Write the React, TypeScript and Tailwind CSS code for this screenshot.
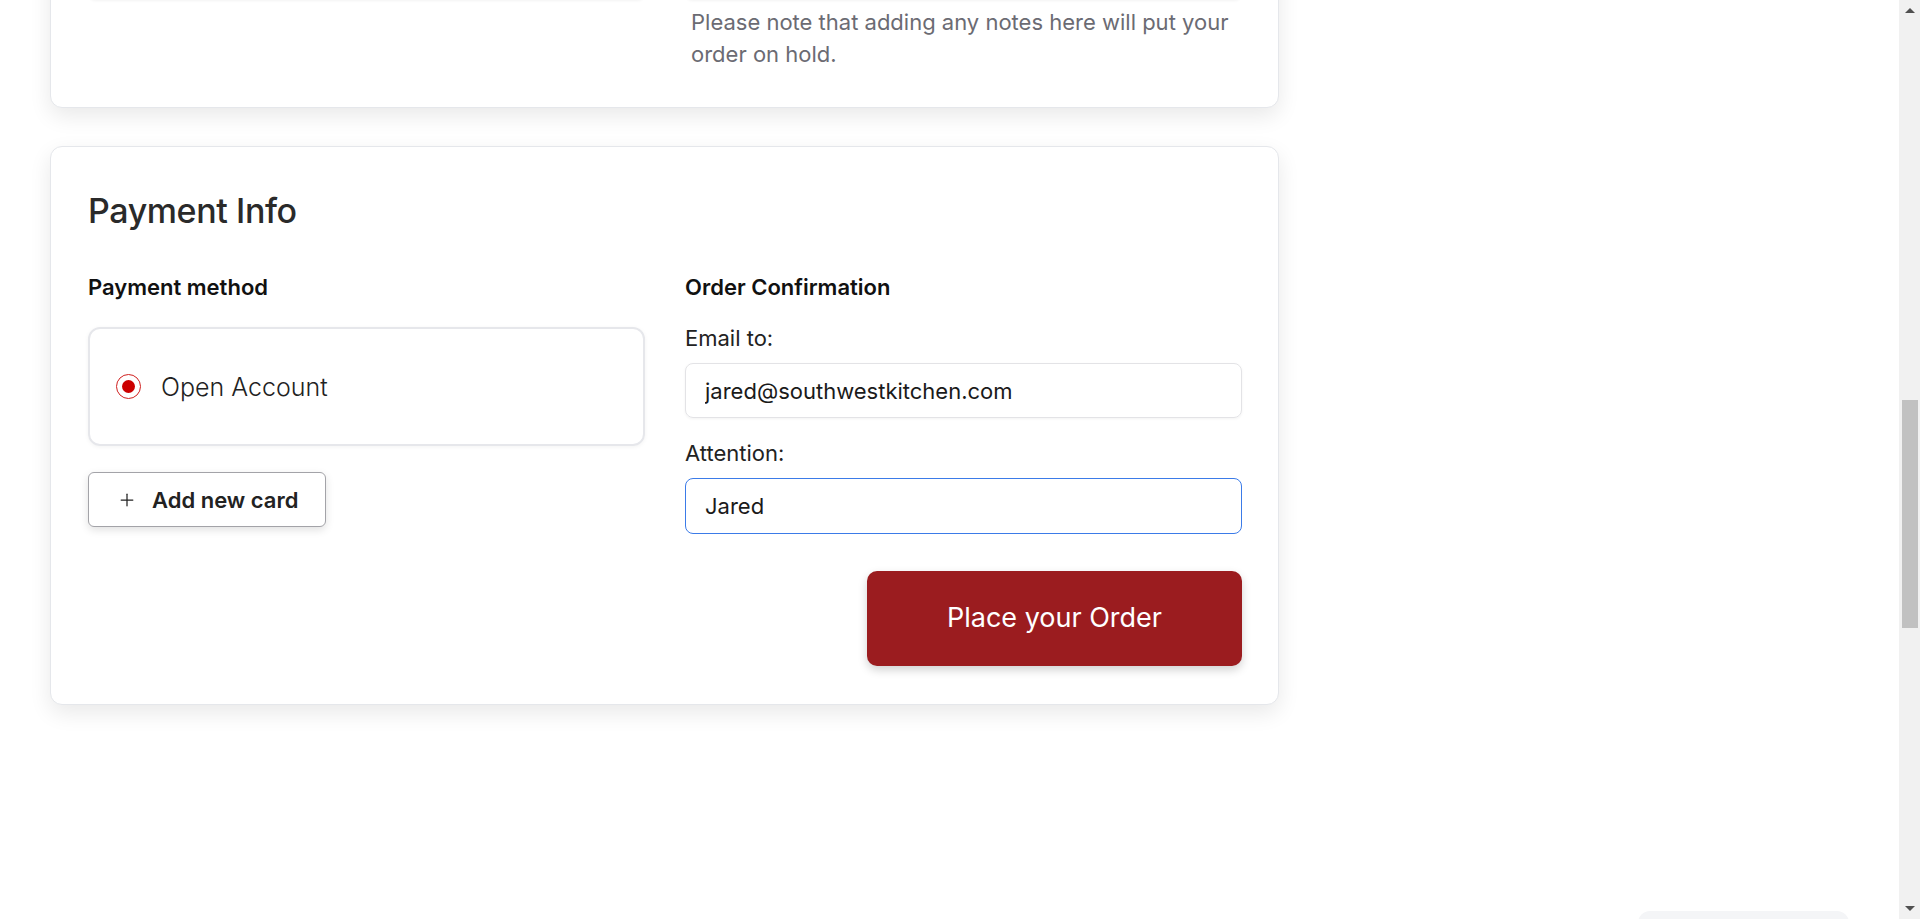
import React, { useState } from "react";
import { Plus } from "lucide-react";

const ScrollBar = () => {
  return (
    <div className="flex h-full w-[21px] shrink-0 flex-col items-center bg-[#f1f1f1]">
      <div className="flex h-[21px] w-full items-center justify-center">
        <div className="h-0 w-0 border-x-[5px] border-b-[5px] border-x-transparent border-b-[#505050]" />
      </div>
      <div className="h-[379px]" />
      <div className="h-[228px] w-[16px] bg-[#c1c1c1]" />
      <div className="flex-1" />
      <div className="flex h-[21px] w-full items-center justify-center">
        <div className="h-0 w-0 border-x-[5px] border-t-[5px] border-x-transparent border-t-[#505050]" />
      </div>
    </div>
  );
};

const App = () => {
  const [email, setEmail] = useState("jared@southwestkitchen.com");
  const [attention, setAttention] = useState("Jared");
  const [method, setMethod] = useState("open");

  return (
    <div className="flex h-[919px] w-full overflow-hidden bg-white font-['Inter',sans-serif] text-[#1c1c1c]">
      <main className="relative flex-1 overflow-hidden">
        <div className="-mt-[150px] flex flex-col gap-[38px] pl-[50px]">
          {/* order notes card (scrolled above) */}
          <section className="w-[1229px] rounded-xl border border-[#e5e7eb] bg-white pt-[37px] pr-[36px] pb-[37px] pl-[37px] shadow-[0_8px_22px_rgba(0,0,0,0.09)]">
            <div className="grid grid-cols-2 gap-10">
              <div className="h-[112px] rounded-lg border border-[#f0f0f0] shadow-[0_1px_3px_rgba(0,0,0,0.05)]" />
              <div>
                <div className="h-[112px] rounded-lg border border-[#f0f0f0] shadow-[0_1px_3px_rgba(0,0,0,0.05)]" />
                <p className="mt-[6px] pl-[6px] text-[22px] leading-[32px] text-[#6b6b73]">
                  Please note that adding any notes here will put your order on hold.
                </p>
              </div>
            </div>
          </section>

          {/* payment info */}
          <section className="w-[1229px] rounded-xl border border-[#e5e7eb] bg-white pt-[42px] pr-[36px] pb-[38px] pl-[37px] shadow-[0_8px_22px_rgba(0,0,0,0.09)]">
            <h2 className="mb-[40px] text-[34px] leading-[44px] font-medium tracking-[-0.4px] text-[#2a2a2a]">
              Payment Info
            </h2>
            <div className="grid grid-cols-2 gap-10">
              <div className="flex flex-col">
                <p className="text-[22px] leading-[28px] font-semibold text-[#111]">Payment method</p>
                <label
                  className="mt-[26px] flex h-[119px] cursor-pointer items-center gap-[20px] rounded-[12px] border-2 border-[#e6e7eb] pl-[26px] shadow-[0_1px_4px_rgba(0,0,0,0.05)]"
                  onClick={() => setMethod("open")}
                >
                  <span className="flex h-[25px] w-[25px] items-center justify-center rounded-full border-[1.5px] border-[#d0201f]">
                    {method === "open" && <span className="h-[13px] w-[13px] rounded-full bg-[#cc0000]" />}
                  </span>
                  <span className="text-[25px] leading-[32px] font-light text-[#222]">Open Account</span>
                </label>
                <div>
                  <button
                    type="button"
                    className="mt-[26px] flex h-[55px] w-[238px] items-center gap-[15px] rounded-[6px] border border-[#a3a3a8] bg-white pl-[28px] shadow-[0_3px_8px_rgba(0,0,0,0.12)]"
                  >
                    <Plus size={20} strokeWidth={1.5} className="text-[#222]" />
                    <span className="text-[22px] leading-[28px] font-semibold text-[#222]">Add new card</span>
                  </button>
                </div>
              </div>

              <div className="flex flex-col">
                <p className="text-[22px] leading-[28px] font-semibold text-[#111]">Order Confirmation</p>
                <p className="mt-[23px] text-[22px] leading-[28px] text-[#222]">Email to:</p>
                <input
                  type="text"
                  value={email}
                  onChange={(e) => setEmail(e.target.value)}
                  className="mt-[11px] h-[55px] w-full rounded-[8px] border border-[#e3e3e6] pl-[19px] text-[22px] text-[#1a1a1a] shadow-[0_1px_3px_rgba(0,0,0,0.05)] outline-none"
                />
                <p className="mt-[21px] text-[22px] leading-[28px] text-[#222]">Attention:</p>
                <input
                  type="text"
                  value={attention}
                  onChange={(e) => setAttention(e.target.value)}
                  className="mt-[11px] h-[56px] w-full rounded-[8px] border border-[#3b7be8] pl-[19px] text-[22px] text-[#1a1a1a] outline-none"
                />
                <div className="mt-[37px] flex justify-end">
                  <button
                    type="button"
                    className="h-[95px] w-[375px] rounded-[10px] bg-[#9b1c1f] text-[27px] font-normal text-white shadow-[0_4px_10px_rgba(0,0,0,0.18)]"
                  >
                    Place your Order
                  </button>
                </div>
              </div>
            </div>
          </section>
        </div>

        {/* floating widget peeking at the bottom */}
        <div className="absolute right-[50px] bottom-[-40px] h-[48px] w-[211px] rounded-t-xl bg-[#f4f5f7]" />
      </main>
      <ScrollBar />
    </div>
  );
};

export default App;
